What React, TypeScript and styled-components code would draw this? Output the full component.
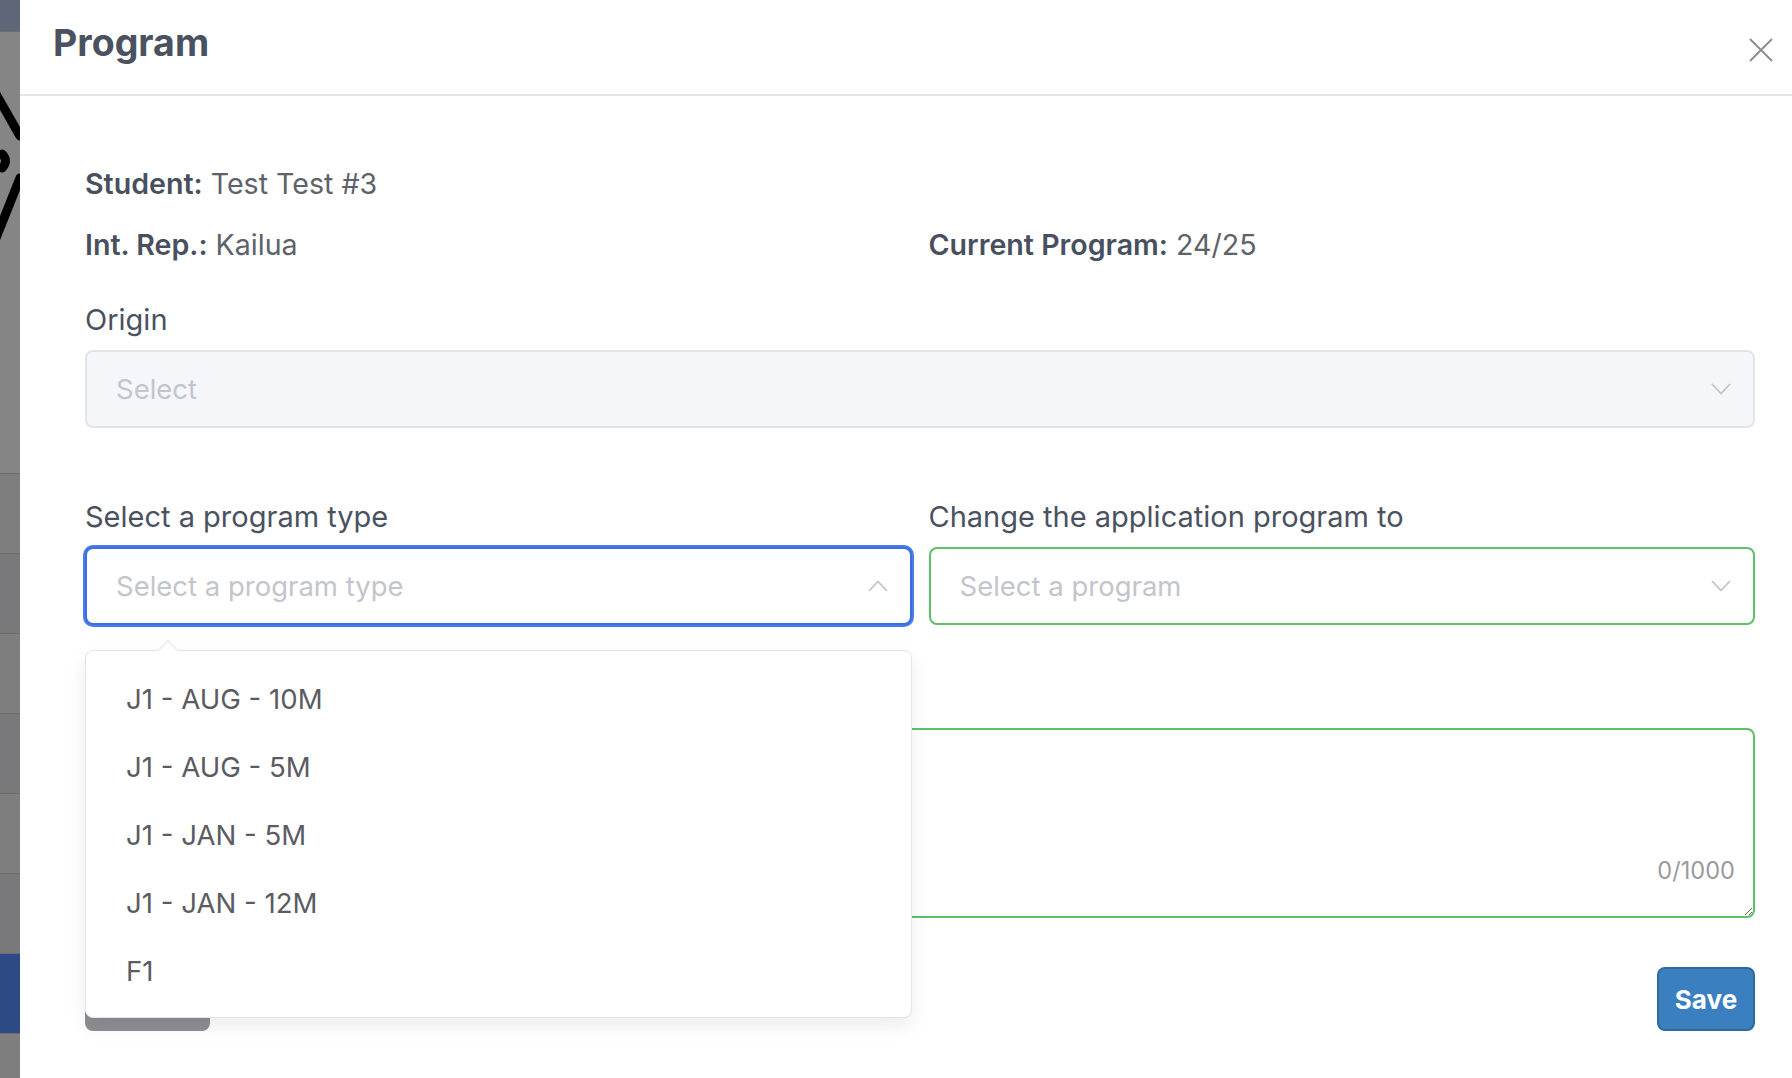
import styled, { createGlobalStyle } from 'styled-components'

const GlobalStyle = createGlobalStyle`
  *, *::before, *::after { box-sizing: border-box; }
  html, body { margin: 0; padding: 0; }
  body {
    font-family: Inter, "Noto Sans", sans-serif;
    background: #ffffff;
    overflow: hidden;
  }
`

const Page = styled.div`
  display: flex;
  width: 1792px;
  height: 1078px;
  overflow: hidden;
`

const Backdrop = styled.div`
  width: 20px;
  flex-shrink: 0;
  display: flex;
  flex-direction: column;
  background: #858585;
`

const BackdropBlock = styled.div<{ $h: number; $bg: string }>`
  height: ${p => p.$h}px;
  flex-shrink: 0;
  background: ${p => p.$bg};
  border-bottom: 1px solid #6d6d70;
  overflow: hidden;
`

const Drawer = styled.div`
  flex: 1;
  display: flex;
  flex-direction: column;
  background: #ffffff;
`

const Header = styled.div`
  height: 96px;
  display: flex;
  justify-content: space-between;
  align-items: flex-start;
  padding: 24px 19px 0 33px;
  border-bottom: 2px solid #e5e5ea;
`

const Title = styled.h1`
  margin: 0;
  font-size: 37.5px;
  line-height: 38px;
  font-weight: 700;
  color: #4a5261;
`

const CloseButton = styled.button`
  margin-top: 14px;
  width: 24px;
  height: 24px;
  padding: 0;
  border: none;
  background: none;
  cursor: pointer;
`

const Body = styled.div`
  padding: 74px 37px 0 65px;
`

const InfoLine = styled.div`
  font-size: 28.6px;
  line-height: 27px;
  color: #5e6269;
`

const InfoGrid = styled.div`
  display: grid;
  grid-template-columns: 1fr 1fr;
  column-gap: 17px;
  margin-top: 34px;
`

const Key = styled.span`
  font-weight: 600;
  color: #48505f;
`

const FieldLabel = styled.div<{ $top?: number }>`
  margin-top: ${p => p.$top ?? 0}px;
  margin-bottom: 16px;
  font-size: 29px;
  line-height: 28px;
  color: #4a5261;
`

type Variant = 'disabled' | 'focused' | 'valid'

const borderFor = (v: Variant) =>
  v === 'focused' ? '#3c6fe4' : v === 'valid' ? '#5ec06b' : '#e3e4ea'

const SelectBox = styled.div<{ $variant: Variant }>`
  height: 78px;
  display: flex;
  align-items: center;
  justify-content: space-between;
  padding: 0 22px 0 29px;
  border: 2px solid ${p => borderFor(p.$variant)};
  border-radius: 8px;
  background: ${p => (p.$variant === 'disabled' ? '#f5f6fa' : '#ffffff')};
  box-shadow: ${p => (p.$variant === 'focused' ? '0 0 0 2px #4a7be8' : 'none')};
`

const Placeholder = styled.span`
  font-size: 27.5px;
  color: #c3c5cc;
`

const TwoCols = styled.div`
  display: grid;
  grid-template-columns: 1fr 1fr;
  column-gap: 17px;
  margin-top: 75px;
`

const SelectWrap = styled.div`
  position: relative;
`

const Dropdown = styled.ul`
  position: absolute;
  top: 103px;
  left: 0;
  right: 0;
  z-index: 10;
  margin: 0;
  padding: 14px 0 12px;
  list-style: none;
  background: #ffffff;
  border: 1px solid #e4e4ea;
  border-radius: 8px;
  box-shadow: 0 8px 20px rgba(0, 0, 0, 0.08);

  &::before {
    content: '';
    position: absolute;
    top: -8px;
    left: 75px;
    width: 14px;
    height: 14px;
    background: #ffffff;
    border-top: 1px solid #e4e4ea;
    border-left: 1px solid #e4e4ea;
    transform: rotate(45deg);
  }
`

const Option = styled.li`
  height: 68px;
  line-height: 68px;
  padding-left: 40px;
  font-size: 27.6px;
  color: #5b5c62;
`

const NoteWrap = styled.div`
  position: relative;
  margin-top: 103px;
`

const Note = styled.textarea`
  display: block;
  width: 100%;
  height: 190px;
  border: 2px solid #5ec06b;
  border-radius: 8px;
  padding: 16px 24px;
  font-family: inherit;
  font-size: 26px;
  resize: vertical;
  outline: none;
`

const Counter = styled.span`
  position: absolute;
  top: 131px;
  right: 20px;
  font-size: 23.6px;
  line-height: 23px;
  color: #9a9aa0;
`

const Actions = styled.div`
  display: flex;
  justify-content: space-between;
  margin-top: 49px;
`

const Button = styled.button<{ $primary?: boolean }>`
  height: 64px;
  width: ${p => (p.$primary ? 98 : 125)}px;
  border-radius: 8px;
  border: 2px solid ${p => (p.$primary ? '#2e69a2' : '#8e8e93')};
  background: ${p => (p.$primary ? '#3a80c1' : '#8e8e93')};
  color: #ffffff;
  font-family: inherit;
  font-size: 26px;
  font-weight: 700;
  padding: 0;
  cursor: pointer;
`

const Chevron = ({ up }: { up?: boolean }) => (
  <svg width="20" height="12" viewBox="0 0 20 12" fill="none">
    <polyline
      points={up ? '1,11 10,1.5 19,11' : '1,1 10,10.5 19,1'}
      stroke="#c2c4ca"
      strokeWidth="1.8"
    />
  </svg>
)

const backdropRows = [
  { h: 32, bg: '#5d6777' },
  { h: 442, bg: '#858585', logo: true },
  { h: 80, bg: '#7e7e7f' },
  { h: 80, bg: '#79797b' },
  { h: 80, bg: '#7e7e7f' },
  { h: 80, bg: '#79797b' },
  { h: 80, bg: '#7e7e7f' },
  { h: 80, bg: '#79797b' },
  { h: 80, bg: '#2d4a86' },
  { h: 80, bg: '#7e7e7f' },
]

const programTypes = ['J1 - AUG - 10M', 'J1 - AUG - 5M', 'J1 - JAN - 5M', 'J1 - JAN - 12M', 'F1']

const App: React.FC = () => {
  return (
    <>
      <GlobalStyle />
      <Page>
        <Backdrop>
          {backdropRows.map((r, i) => (
            <BackdropBlock key={i} $h={r.h} $bg={r.bg}>
              {r.logo && (
                <svg width="20" height="240" viewBox="0 0 20 240">
                  <path
                    d="M-4 62 L20 104 M2 122 Q9 129 2 136 M20 146 L-4 206"
                    stroke="#000"
                    strokeWidth="9"
                    strokeLinecap="round"
                    fill="none"
                  />
                </svg>
              )}
            </BackdropBlock>
          ))}
        </Backdrop>
        <Drawer>
          <Header>
            <Title>Program</Title>
            <CloseButton aria-label="Close">
              <svg width="24" height="24" viewBox="0 0 24 24">
                <path d="M1 1 L23 23 M23 1 L1 23" stroke="#8e8e93" strokeWidth="2" />
              </svg>
            </CloseButton>
          </Header>
          <Body>
            <InfoLine>
              <Key>Student:</Key> Test Test #3
            </InfoLine>
            <InfoGrid>
              <InfoLine>
                <Key>Int. Rep.:</Key> Kailua
              </InfoLine>
              <InfoLine>
                <Key>Current Program:</Key> 24/25
              </InfoLine>
            </InfoGrid>

            <FieldLabel $top={48}>Origin</FieldLabel>
            <SelectBox $variant="disabled">
              <Placeholder>Select</Placeholder>
              <Chevron />
            </SelectBox>

            <TwoCols>
              <div>
                <FieldLabel>Select a program type</FieldLabel>
                <SelectWrap>
                  <SelectBox $variant="focused">
                    <Placeholder>Select a program type</Placeholder>
                    <Chevron up />
                  </SelectBox>
                  <Dropdown>
                    {programTypes.map(t => (
                      <Option key={t}>{t}</Option>
                    ))}
                  </Dropdown>
                </SelectWrap>
              </div>
              <div>
                <FieldLabel>Change the application program to</FieldLabel>
                <SelectBox $variant="valid">
                  <Placeholder>Select a program</Placeholder>
                  <Chevron />
                </SelectBox>
              </div>
            </TwoCols>

            <NoteWrap>
              <Note />
              <Counter>0/1000</Counter>
            </NoteWrap>

            <Actions>
              {/* label is covered by the open dropdown in the screenshot */}
              <Button aria-label="Cancel" />
              <Button $primary>Save</Button>
            </Actions>
          </Body>
        </Drawer>
      </Page>
    </>
  )
}

export default App
